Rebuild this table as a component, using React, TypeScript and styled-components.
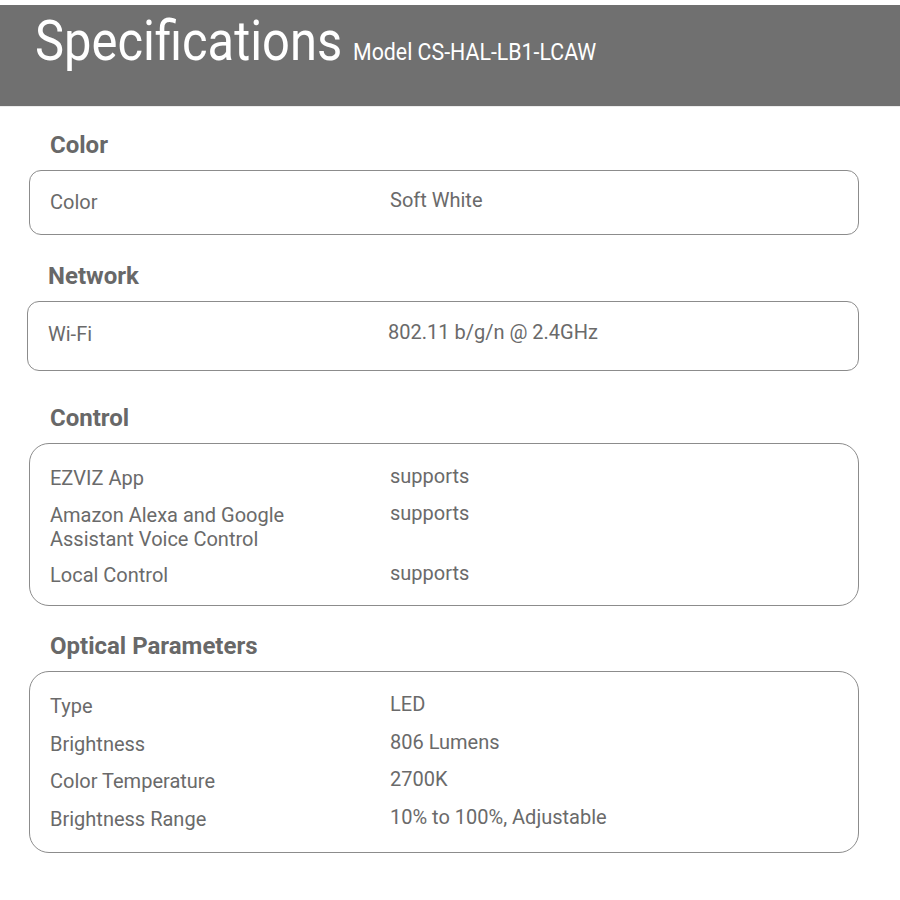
import React from "react";
import styled, { createGlobalStyle } from "styled-components";

const Global = createGlobalStyle`
  html, body { margin: 0; padding: 0; background: #ffffff; }
  body { font-family: Roboto, "Noto Sans", "Liberation Sans", sans-serif; color: #666666; }
`;

const Page = styled.div`
  width: 900px;
  padding-top: 5px;
  padding-bottom: 44px;
  background: #ffffff;
`;

const Header = styled.header`
  height: 102px;
  background: #707070;
  border-bottom: 1px solid #ececec;
  box-sizing: border-box;
  padding: 6px 0 0 35px;
  display: flex;
  align-items: baseline;
  gap: 13px;
  color: #ffffff;
`;

const Title = styled.h1`
  margin: 0;
  font-family: Roboto, "Liberation Sans", sans-serif;
  font-weight: 400;
  font-size: 55px;
  line-height: 60px;
  display: inline-block;
  transform-origin: left bottom;
  transform: scaleX(0.889);
  margin-right: -41px;
`;

const Model = styled.span`
  font-family: Roboto, "Liberation Sans", sans-serif;
  font-size: 24px;
  font-weight: 400;
  display: inline-block;
  transform-origin: left bottom;
  transform: scaleX(0.889);
`;

const Content = styled.main`
  padding: 23px 41px 0 29px;
  display: flex;
  flex-direction: column;
`;

const Section = styled.section<{ $shift?: number; $top: number }>`
  display: flex;
  flex-direction: column;
  gap: 10px;
  margin-top: ${(p) => p.$top}px;
  margin-left: ${(p) => (p.$shift ? `${p.$shift}px` : "0")};
`;

const Heading = styled.h2`
  margin: 0;
  padding-left: 21px;
  font-size: 24px;
  line-height: 30px;
  font-weight: 700;
  color: #686868;
`;

const Box = styled.div<{ $radius: number; $pad: string; $gap: number }>`
  border: 1px solid #8c8c8c;
  border-radius: ${(p) => p.$radius}px;
  padding: ${(p) => p.$pad};
  display: flex;
  flex-direction: column;
  gap: ${(p) => p.$gap}px;
`;

const Row = styled.div`
  display: grid;
  grid-template-columns: 300px 1fr;
  column-gap: 40px;
  font-size: 20px;
  line-height: 24px;
  color: #6a6a6a;
`;

const Label = styled.div``;

const Value = styled.div`
  margin-top: -2px;
`;

type Spec = {
  title: string;
  top: number;
  radius: number;
  pad: string;
  gap: number;
  shift?: number;
  rows: [string, string][];
};

const specs: Spec[] = [
  { title: "Color", top: 0, radius: 12, pad: "19px 20px 20px", gap: 0, rows: [["Color", "Soft White"]] },
  { title: "Network", top: 26, radius: 12, pad: "20px 20px 24px", gap: 0, shift: -2, rows: [["Wi-Fi", "802.11 b/g/n @ 2.4GHz"]] },
  {
    title: "Control",
    top: 32,
    radius: 20,
    pad: "22px 20px 18px",
    gap: 12.5,
    rows: [
      ["EZVIZ App", "supports"],
      ["Amazon Alexa and Google Assistant Voice Control", "supports"],
      ["Local Control", "supports"],
    ],
  },
  {
    title: "Optical Parameters",
    top: 25,
    radius: 20,
    pad: "22px 20px 21px",
    gap: 13.7,
    rows: [
      ["Type", "LED"],
      ["Brightness", "806 Lumens"],
      ["Color Temperature", "2700K"],
      ["Brightness Range", "10% to 100%, Adjustable"],
    ],
  },
];

export default function App() {
  return (
    <>
      <Global />
      <Page>
        <Header>
          <Title>Specifications</Title>
          <Model>Model CS-HAL-LB1-LCAW</Model>
        </Header>
        <Content>
          {specs.map((s) => (
            <Section key={s.title} $shift={s.shift} $top={s.top}>
              <Heading>{s.title}</Heading>
              <Box $radius={s.radius} $pad={s.pad} $gap={s.gap}>
                {s.rows.map(([l, v]) => (
                  <Row key={l}>
                    <Label>{l}</Label>
                    <Value>{v}</Value>
                  </Row>
                ))}
              </Box>
            </Section>
          ))}
        </Content>
      </Page>
    </>
  );
}
